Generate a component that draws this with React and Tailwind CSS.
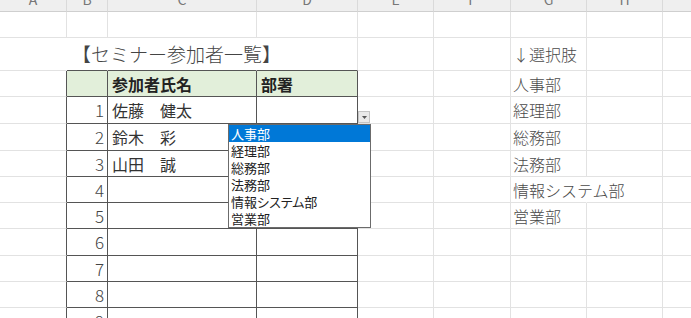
import React from 'react';

const COLS = ['A', 'B', 'C', 'D', 'E', 'F', 'G', 'H', 'I'];

// sheet content, one array per row (columns A..I)
const ROWS = [
  [],
  [null, { text: '【セミナー参加者一覧】', kind: 'title' }, null, null, null, null, { text: '↓選択肢', kind: 'list' }],
  [null, '', { text: '参加者氏名', kind: 'head' }, { text: '部署', kind: 'head' }, null, null, { text: '人事部', kind: 'list' }],
  [null, { text: '1', kind: 'num' }, { text: '佐藤　健太', kind: 'name' }, null, null, null, { text: '経理部', kind: 'list' }],
  [null, { text: '2', kind: 'num' }, { text: '鈴木　彩', kind: 'name' }, null, null, null, { text: '総務部', kind: 'list' }],
  [null, { text: '3', kind: 'num' }, { text: '山田　誠', kind: 'name' }, null, null, null, { text: '法務部', kind: 'list' }],
  [null, { text: '4', kind: 'num' }, null, null, null, null, { text: '情報システム部', kind: 'list' }],
  [null, { text: '5', kind: 'num' }, null, null, null, null, { text: '営業部', kind: 'list' }],
  [null, { text: '6', kind: 'num' }],
  [null, { text: '7', kind: 'num' }],
  [null, { text: '8', kind: 'num' }],
  [null, { text: '9', kind: 'num' }],
];

const DEPARTMENTS = ['人事部', '経理部', '総務部', '法務部', '情報システム部', '営業部'];

const inTable = (r, c) => r >= 2 && c >= 1 && c <= 3;

// gridlines hidden where text runs over into the next cell
const hideRight = (r, c) => (r === 1 && c <= 2) || (r === 6 && c === 6);

const textClass = {
  title: 'pl-[5px] text-[19px] font-light text-[#444] whitespace-nowrap',
  head: 'pl-[4px] text-[16px] font-bold text-[#222]',
  num: 'justify-end pr-[3px] text-[17px] font-light text-[#444]',
  name: 'pl-[4px] text-[16px] text-[#333]',
  list: 'pl-[2px] text-[16px] font-light text-[#4a4a4a] whitespace-nowrap',
};

function Cell({ r, c, value }) {
  const darkRight = inTable(r, c) || inTable(r, c + 1);
  const darkBottom = inTable(r, c) || inTable(r + 1, c);
  const right = hideRight(r, c)
    ? 'border-r-transparent'
    : darkRight
      ? 'border-r-[#555]'
      : 'border-r-[#e2e2e2]';
  const bottom = darkBottom ? 'border-b-[#555]' : 'border-b-[#e2e2e2]';
  const bg = r === 2 && inTable(r, c) ? 'bg-[#e2efda]' : '';
  const kind = value && value.kind;

  return (
    <div className={`flex items-center border-r border-b ${right} ${bottom} ${bg} ${kind ? textClass[kind] : ''}`}>
      {value && value.text}
    </div>
  );
}

function DropdownList() {
  return (
    <>
      <div className="absolute left-[358px] top-[111px] w-[12px] h-[12px] bg-[#e9e9e9] border border-[#c4c4c4] flex items-center justify-center">
        <svg width="5" height="3" viewBox="0 0 5 3">
          <path d="M0 0h5L2.5 3z" fill="#555" />
        </svg>
      </div>
      <div className="absolute left-[228px] top-[124px] w-[143px] bg-white border border-[#6b6b6b] [font-feature-settings:'palt']">
        {DEPARTMENTS.map((d, i) => (
          <div
            key={d}
            className={`h-[17px] leading-[17px] pl-[2px] text-[13px] ${i === 0 ? 'bg-[#0078d7] text-white' : 'text-[#222]'}`}
          >
            {d}
          </div>
        ))}
      </div>
    </>
  );
}

export default function App() {
  return (
    <div className="relative w-[691px] h-[318px] overflow-hidden bg-white font-['Noto_Sans_CJK_JP',sans-serif]">
      <div className="grid grid-cols-[67px_41px_149px_101px_76px_77px_76px_76px_76px] grid-rows-[12px_26px_33px_26px_27px_27px_26px_26px_26px_27px_26px_26px_26px]">
        {/* column headings, scrolled so only their lower edge shows */}
        {COLS.map((col) => (
          <div
            key={col}
            className="flex justify-center overflow-hidden bg-[#efefef] border-r border-r-[#dadada] border-b border-b-[#cfcfcf]"
          >
            <span className="-mt-[8px] text-[14px] leading-none text-[#777]">{col}</span>
          </div>
        ))}
        {ROWS.map((row, r) =>
          COLS.map((_, c) => <Cell key={`${r}-${c}`} r={r} c={c} value={row[c]} />)
        )}
      </div>
      <DropdownList />
    </div>
  );
}
